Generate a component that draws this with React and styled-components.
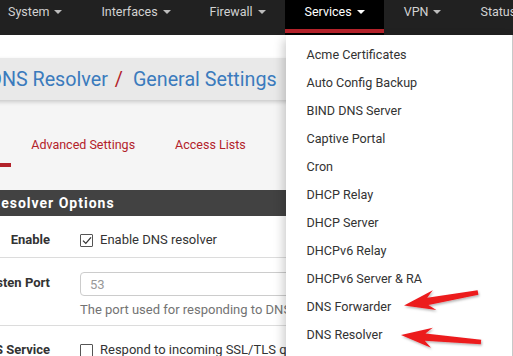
import React from 'react'
import styled, { createGlobalStyle } from 'styled-components'

const GlobalStyle = createGlobalStyle`
  html, body {
    margin: 0;
    padding: 0;
    background: #ffffff;
  }
  body {
    font-family: Roboto, "Liberation Sans", Arial, sans-serif;
    width: 513px;
    height: 356px;
    overflow: hidden;
  }
`

const Page = styled.div`
  position: relative;
  width: 513px;
  height: 356px;
  overflow: hidden;
  background: #f5f5f5;
`

const NavBar = styled.nav`
  height: 35px;
  background: #212121;
  display: flex;
  position: relative;
  z-index: 5;
`

const NavList = styled.ul`
  display: flex;
  margin: 0 0 0 -12px;
  padding: 0;
  list-style: none;
`

const NavItem = styled.li`
  position: relative;
  display: flex;
  align-items: center;
  gap: 5px;
  padding: 0 19px 12px 20px;
  font-size: 12.5px;
  white-space: nowrap;
  color: ${({ $active }) => ($active ? '#ffffff' : '#d2d2d2')};
  background: ${({ $active }) => ($active ? '#000000' : 'transparent')};

  &::after {
    content: '';
    display: ${({ $active }) => ($active ? 'block' : 'none')};
    position: absolute;
    left: 0;
    right: 0;
    bottom: 2px;
    height: 4px;
    background: #b3222a;
  }
`

const Caret = styled.span`
  width: 0;
  height: 0;
  border-left: 4px solid transparent;
  border-right: 4px solid transparent;
  border-top: 4px solid ${({ $active }) => ($active ? '#ffffff' : '#bdbdbd')};
`

const Dropdown = styled.ul`
  position: absolute;
  top: 35px;
  left: 1px;
  width: 226px;
  margin: 0;
  padding: 6px 0;
  list-style: none;
  background: #ffffff;
  border-right: 1px solid #c8c8c8;
  box-shadow: -2px 4px 10px rgba(0, 0, 0, 0.22);
`

const DropItem = styled.li`
  height: 28px;
  line-height: 28px;
  padding-left: 21px;
  font-size: 12.6px;
  color: #333333;
`

const Main = styled.div`
  margin-left: -200px;
`

const Crumbs = styled.div`
  background: #ffffff;
  padding-top: 23px;
`

const CrumbBar = styled.div`
  height: 42px;
  background: #e9e9e9;
  box-shadow: 0 2px 4px rgba(0, 0, 0, 0.18);
  display: flex;
  align-items: center;
  padding-left: 189px;
  font-size: 19.7px;
  color: #3b7bbd;
  white-space: nowrap;
  position: relative;
`

const Slash = styled.span`
  color: #b3222a;
  margin: 0 10px 0 7px;
`

const TabRow = styled.ul`
  display: flex;
  margin: 26px 0 23px;
  padding: 0 0 0 80px;
  list-style: none;
`

const Tab = styled.li`
  padding: 11px 20px 10px;
  line-height: 16px;
  font-size: 12.5px;
  color: #b3222a;
  white-space: nowrap;
  border-bottom: 4px solid ${({ $active }) => ($active ? '#b3222a' : 'transparent')};
`

const PanelHeading = styled.div`
  height: 26px;
  background: #424242;
  color: #ffffff;
  font-size: 14px;
  font-weight: 700;
  letter-spacing: 1px;
  display: flex;
  align-items: center;
  padding-left: 96px;
  white-space: nowrap;
`

const PanelBody = styled.div`
  background: #ffffff;
`

const Row = styled.div`
  display: grid;
  grid-template-columns: 280px 1fr;
  align-items: start;
  padding: 14px 0 7px;
  border-bottom: 1px solid #dcdcdc;
`

const Label = styled.div`
  text-align: right;
  padding-right: 30px;
  font-size: 13px;
  font-weight: 700;
  color: #333333;
  line-height: ${({ $tall }) => ($tall ? '22px' : '20px')};
  white-space: nowrap;
`

const Control = styled.div`
  display: flex;
  flex-direction: column;
  font-size: 13px;
  color: #333333;
`

const CheckLine = styled.label`
  display: flex;
  align-items: center;
  gap: 7px;
  line-height: 20px;
  white-space: nowrap;
`

const Box = styled.span`
  width: 11px;
  height: 11px;
  border: 1px solid #555555;
  border-radius: 1px;
  background: #ffffff;
  display: flex;
  align-items: center;
  justify-content: center;
`

const Input = styled.div`
  height: 22px;
  width: 600px;
  border: 1px solid #cccccc;
  border-radius: 4px;
  padding-left: 9px;
  display: flex;
  align-items: center;
  color: #999999;
  font-size: 13px;
`

const Help = styled.div`
  margin-top: 6px;
  line-height: 16px;
  color: #737373;
  white-space: nowrap;
`

const Overlay = styled.svg`
  position: absolute;
  left: 0;
  top: 0;
  pointer-events: none;
  z-index: 10;
`

const services = [
  'Acme Certificates',
  'Auto Config Backup',
  'BIND DNS Server',
  'Captive Portal',
  'Cron',
  'DHCP Relay',
  'DHCP Server',
  'DHCPv6 Relay',
  'DHCPv6 Server & RA',
  'DNS Forwarder',
  'DNS Resolver',
  'Dynamic DNS',
]

function arrowPoints(tail, tip, headLen = 31, headHalf = 10, tailHalf = 2.2, neckHalf = 3.6) {
  const dx = tip[0] - tail[0]
  const dy = tip[1] - tail[1]
  const len = Math.hypot(dx, dy)
  const d = [dx / len, dy / len]
  const n = [-d[1], d[0]]
  const at = (p, k, h) => [p[0] - d[0] * k + n[0] * h, p[1] - d[1] * k + n[1] * h]
  const pts = [
    tip,
    at(tip, headLen, headHalf),
    at(tip, headLen * 0.78, neckHalf),
    [tail[0] + n[0] * tailHalf, tail[1] + n[1] * tailHalf],
    [tail[0] - n[0] * tailHalf, tail[1] - n[1] * tailHalf],
    at(tip, headLen * 0.78, -neckHalf),
    at(tip, headLen, -headHalf),
  ]
  return pts.map((p) => p.map((v) => v.toFixed(1)).join(',')).join(' ')
}

function Checkbox({ checked }) {
  return (
    <Box>
      {checked && (
        <svg width="10" height="9" viewBox="0 0 10 9">
          <path d="M1 4.6 L3.8 7.4 L9 1.4" fill="none" stroke="#333" strokeWidth="1.3" />
        </svg>
      )}
    </Box>
  )
}

export default function App() {
  const nav = ['System', 'Interfaces', 'Firewall', 'Services', 'VPN', 'Status']
  return (
    <>
      <GlobalStyle />
      <Page>
        <NavBar>
          <NavList>
            {nav.map((item) => {
              const active = item === 'Services'
              return (
                <NavItem key={item} $active={active}>
                  {item}
                  {item !== 'Status' && <Caret $active={active} />}
                  {active && (
                    <Dropdown>
                      {services.map((s) => (
                        <DropItem key={s}>{s}</DropItem>
                      ))}
                    </Dropdown>
                  )}
                </NavItem>
              )
            })}
          </NavList>
        </NavBar>

        <Main>
          <Crumbs>
            <CrumbBar>
              DNS Resolver<Slash>/</Slash>General Settings
            </CrumbBar>
          </Crumbs>

          <TabRow>
            <Tab $active>General Settings</Tab>
            <Tab>Advanced Settings</Tab>
            <Tab>Access Lists</Tab>
          </TabRow>

          <PanelHeading>General DNS Resolver Options</PanelHeading>
          <PanelBody>
            <Row>
              <Label>Enable</Label>
              <Control>
                <CheckLine>
                  <Checkbox checked />
                  Enable DNS resolver
                </CheckLine>
              </Control>
            </Row>
            <Row>
              <Label $tall>Listen Port</Label>
              <Control>
                <Input>53</Input>
                <Help>The port used for responding to DNS queries. It should normally be left blank unless another service needs to bind to TCP/UDP port 53.</Help>
              </Control>
            </Row>
            <Row>
              <Label>SSL/TLS Service</Label>
              <Control>
                <CheckLine>
                  <Checkbox />
                  Respond to incoming SSL/TLS queries from local clients
                </CheckLine>
              </Control>
            </Row>
          </PanelBody>
        </Main>

        <Overlay width="513" height="356" viewBox="0 0 513 356">
          <defs>
            <filter id="soft" x="-20%" y="-50%" width="140%" height="200%">
              <feDropShadow dx="1" dy="1.5" stdDeviation="1.2" floodColor="#000" floodOpacity="0.3" />
            </filter>
          </defs>
          <polygon points={arrowPoints([478, 292.5], [404, 305.5])} fill="#ec1a1f" filter="url(#soft)" />
          <polygon points={arrowPoints([481, 342], [401, 335])} fill="#ec1a1f" filter="url(#soft)" />
        </Overlay>
      </Page>
    </>
  )
}
